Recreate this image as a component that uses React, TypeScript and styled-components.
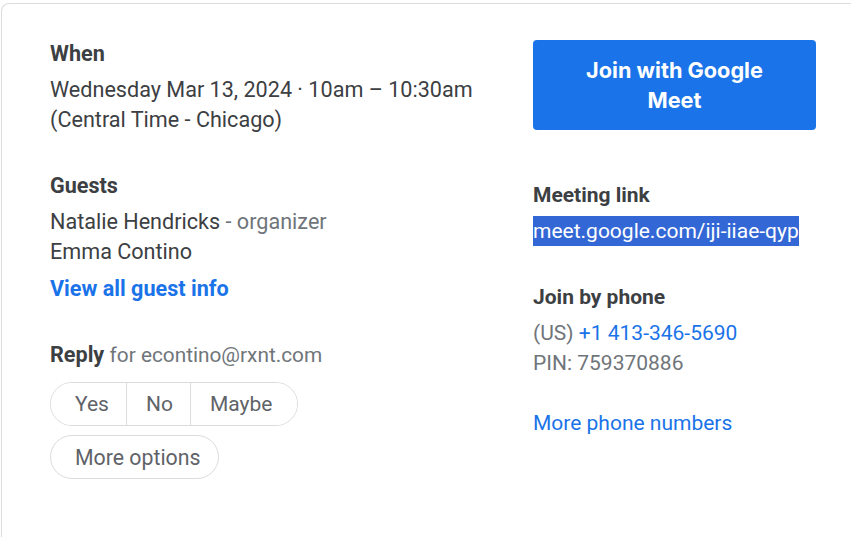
import * as React from "react";
import styled, { createGlobalStyle } from "styled-components";

const GlobalStyle = createGlobalStyle`
  html, body {
    margin: 0;
    padding: 0;
    background: #fff;
    overflow: hidden;
  }
  body {
    font-family: Roboto, "Liberation Sans", Arial, sans-serif;
    color: #3c4043;
  }
`;

const Card = styled.div`
  box-sizing: border-box;
  margin: 3px 0 0 1px;
  min-height: calc(100vh - 3px);
  border: 1px solid #dadce0;
  border-right: none;
  border-bottom: none;
  border-top-left-radius: 8px;
  padding: 35px 0 40px 48px;
  display: grid;
  grid-template-columns: 483px 1fr;
  align-items: start;
`;

const Column = styled.div<{ size: number }>`
  display: flex;
  flex-direction: column;
  font-size: ${p => p.size}px;
`;

const Section = styled.div<{ gap?: number }>`
  display: flex;
  flex-direction: column;
  margin-top: ${p => p.gap ?? 36}px;
  &:first-child {
    margin-top: 0;
  }
`;

const Heading = styled.div`
  font-weight: 700;
  line-height: 30px;
  color: #3c4043;
  margin-bottom: 6px;
  white-space: nowrap;
`;

const Line = styled.div<{ muted?: boolean }>`
  line-height: 30px;
  color: ${p => (p.muted ? "#70757a" : "#3c4043")};
  white-space: nowrap;
`;

const Muted = styled.span`
  color: #70757a;
`;

const Link = styled.a<{ bold?: boolean }>`
  line-height: 30px;
  color: #1a73e8;
  font-weight: ${p => (p.bold ? 700 : 400)};
  text-decoration: none;
  white-space: nowrap;
  cursor: pointer;
`;

const InlineLink = styled.span`
  color: #1a73e8;
`;

const SelectedLink = styled.span`
  align-self: flex-start;
  line-height: 30px;
  color: #fff;
  background: #3367d6;
  white-space: nowrap;
`;

const ReplyLine = styled.div`
  line-height: 30px;
  color: #70757a;
  white-space: nowrap;
  b {
    font-weight: 700;
    color: #3c4043;
  }
  span {
    font-size: 20.8px;
  }
`;

const Segmented = styled.div`
  display: inline-flex;
  align-self: flex-start;
  margin-top: 12px;
  border: 1px solid #dadce0;
  border-radius: 22px;
  overflow: hidden;
`;

const Segment = styled.button<{ w: number; pad: number }>`
  box-sizing: border-box;
  width: ${p => p.w}px;
  height: 42px;
  border: none;
  background: #fff;
  font-family: Roboto, "Liberation Sans", Arial, sans-serif;
  font-size: 21px;
  color: #5f6368;
  text-align: left;
  cursor: pointer;
  padding: 0 0 0 ${p => p.pad}px;
  & + & {
    border-left: 1px solid #dadce0;
  }
`;

const PillButton = styled.button`
  align-self: flex-start;
  box-sizing: border-box;
  margin-top: 9px;
  width: 169px;
  height: 44px;
  border: 1px solid #dadce0;
  border-radius: 22px;
  background: #fff;
  font-family: Roboto, "Liberation Sans", Arial, sans-serif;
  font-size: 21.3px;
  color: #5f6368;
  text-align: left;
  padding: 0 0 0 24px;
`;

const JoinButton = styled.button`
  box-sizing: border-box;
  width: 283px;
  height: 90px;
  margin-top: 1px;
  border: none;
  border-radius: 4px;
  background: #1a73e8;
  color: #fff;
  font-family: Inter, "Open Sans", sans-serif;
  font-weight: 700;
  font-size: 21.7px;
  line-height: 30px;
  padding: 0 36px;
  cursor: pointer;
`;

export default function App() {
  return (
    <>
      <GlobalStyle />
      <Card>
        <Column size={21.6}>
          <Section>
            <Heading>When</Heading>
            <Line>Wednesday Mar 13, 2024 · 10am – 10:30am</Line>
            <Line>(Central Time - Chicago)</Line>
          </Section>
          <Section>
            <Heading>Guests</Heading>
            <Line>
              Natalie Hendricks <Muted>- organizer</Muted>
            </Line>
            <Line>Emma Contino</Line>
            <Link bold style={{ marginTop: 7 }}>
              View all guest info
            </Link>
          </Section>
          <Section>
            <ReplyLine>
              <b>Reply</b> <span>for econtino@rxnt.com</span>
            </ReplyLine>
            <Segmented>
              <Segment w={75} pad={24}>Yes</Segment>
              <Segment w={64} pad={19}>No</Segment>
              <Segment w={107} pad={19}>Maybe</Segment>
            </Segmented>
            <PillButton>More options</PillButton>
          </Section>
        </Column>
        <Column size={21}>
          <JoinButton>Join with Google Meet</JoinButton>
          <Section gap={50}>
            <Heading>Meeting link</Heading>
            <SelectedLink>meet.google.com/iji-iiae-qyp</SelectedLink>
          </Section>
          <Section>
            <Heading>Join by phone</Heading>
            <Line muted>
              (US) <InlineLink>+1 413-346-5690</InlineLink>
            </Line>
            <Line muted>PIN: 759370886</Line>
          </Section>
          <Section gap={30}>
            <Link>More phone numbers</Link>
          </Section>
        </Column>
      </Card>
    </>
  );
}
